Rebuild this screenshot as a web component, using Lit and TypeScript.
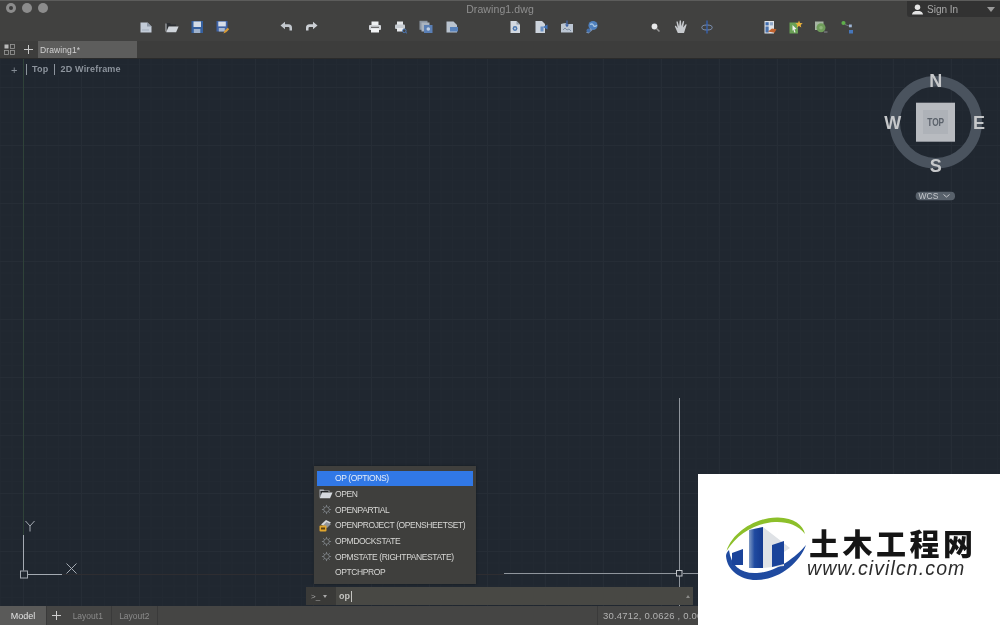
import { LitElement, html, css } from "lit";
import { customElement } from "lit/decorators.js";

const toolbar = () => [
  [
    html`<svg class="ic" viewBox="0 0 14 14" width="14" height="14"><path d="M1.500 2.500h7l4 4v6h-11z" fill="#c3ccd8"/><path d="M8 2.500l4.500 4H8z" fill="#8d97a5"/><path d="M3 10h7" stroke="#a3aebd" stroke-width="1"/></svg>`,
    html`<svg class="ic" viewBox="0 0 14 14" width="14" height="14"><path d="M1 3h4l1 1.500h5v1.500H4l-3 6z" fill="#2c2f33"/><path d="M3.600 6.500h10l-2.500 5.800H1.200z" fill="#cfd4da"/><path d="M1 3.500v8" stroke="#dfe3e8" stroke-width=".8"/></svg>`,
    html`<svg class="ic" viewBox="0 0 14 14" width="14" height="14"><rect x="1.500" y="1" width="11.500" height="12" fill="#35609f"/><rect x="3.500" y="1.500" width="7.500" height="5.500" fill="#d3dbe6"/><rect x="3.800" y="9" width="6.500" height="4" fill="#9fb2cc"/></svg>`,
    html`<svg class="ic" viewBox="0 0 14 14" width="14" height="14"><rect x="0.500" y="1" width="11" height="10.500" fill="#3f63a6"/><rect x="2.300" y="1.600" width="7.500" height="4.800" fill="#d6dde8"/><rect x="2.800" y="8" width="6" height="3.500" fill="#a9b8d0"/><path d="M7.500 13.500l1-2.800 3.200-3 1.500 1.500-3 3z" fill="#d99a33"/></svg>`,
  ],
  [
    html`<svg class="ic" viewBox="0 0 14 14" width="14" height="14"><path d="M1.500 5.500L6 1.800v2.400h3.500c2.300 0 3.500 1.400 3.500 3.600V10.500H10.500V8.300c0-1-.5-1.400-1.500-1.400H6v2.300z" fill="#c2c7cd"/></svg>`,
    html`<svg class="ic" viewBox="0 0 14 14" width="14" height="14"><path d="M12.500 5.500L8 1.800v2.400H4.500C2.200 4.200 1 5.600 1 7.800V10.500H3.500V8.300c0-1 .5-1.400 1.500-1.400H8v2.300z" fill="#ccd0d5"/></svg>`,
  ],
  [
    html`<svg class="ic" viewBox="0 0 14 14" width="14" height="14"><rect x="3.500" y="1.500" width="7" height="4" fill="#eef0f2"/><rect x="1" y="5" width="12" height="5" rx="1" fill="#d3d6da"/><rect x="3" y="8.500" width="8" height="4" fill="#f2f3f5"/><rect x="3" y="6.800" width="8" height="1" fill="#555"/></svg>`,
    html`<svg class="ic" viewBox="0 0 14 14" width="14" height="14"><rect x="3" y="1.500" width="6" height="3.500" fill="#e4e7ea"/><rect x="1" y="4.500" width="10" height="4.500" rx="1" fill="#c6cbd1"/><rect x="3" y="8" width="6" height="3.500" fill="#e8eaed"/><circle cx="10.300" cy="10.800" r="1.800" fill="none" stroke="#4c79b8" stroke-width="1"/><path d="M11.500 12l1.500 1.300" stroke="#4c79b8"/></svg>`,
    html`<svg class="ic" viewBox="0 0 14 14" width="14" height="14"><rect x="0.500" y="0.800" width="8" height="9" fill="#8b95a2"/><rect x="2.500" y="2.500" width="8" height="9" fill="#aab3bf"/><rect x="5" y="5" width="8.500" height="8" fill="#5a7fb5"/><circle cx="9.300" cy="9" r="1.800" fill="#c2d0e4"/></svg>`,
    html`<svg class="ic" viewBox="0 0 14 14" width="14" height="14"><path d="M1.500 1.500h7l3.500 3.500v7.500H1.500z" fill="#b9c3cf"/><rect x="5" y="7" width="8" height="4.500" fill="#5882bb"/></svg>`,
  ],
  [
    html`<svg class="ic" viewBox="0 0 14 14" width="14" height="14"><path d="M2.500 1h6l3.500 3.500V13H2.500z" fill="#d3d9e1"/><path d="M8.500 1v3.500H12z" fill="#95a0ae"/><circle cx="7" cy="8.500" r="2.400" fill="#4c78b0"/><circle cx="7" cy="8.500" r=".9" fill="#d3d9e1"/></svg>`,
    html`<svg class="ic" viewBox="0 0 14 14" width="14" height="14"><path d="M1.500 1h6.500l3 3v9H1.500z" fill="#cdd4dd"/><path d="M13.500 4.500L9 7l4.500 2.500z" fill="#3f72b8"/><path d="M6.500 6.500h3v5h-3z" fill="#3f72b8" opacity=".7"/></svg>`,
    html`<svg class="ic" viewBox="0 0 14 14" width="14" height="14"><path d="M1 4h12v8.500H1z" fill="#bcc6d3"/><path d="M1 4l3-1h2l1 1z" fill="#9aa6b5"/><path d="M7 0.500v6" stroke="#3f64a8" stroke-width="1.300"/><path d="M4.800 4.500L7 7l2.200-2.500z" fill="#3f64a8"/><path d="M3 10l2-2 2 2 2-1 2 2" fill="none" stroke="#7d8ea5"/></svg>`,
    html`<svg class="ic" viewBox="0 0 14 14" width="14" height="14"><circle cx="8" cy="5.500" r="4.600" fill="#4f80bd"/><path d="M5 4.500c2-1 3-.5 3.500 1s2 1 3.300-.3" stroke="#a7c5e2" stroke-width="1.300" fill="none"/><path d="M1 12.500l4.500-4.500 2 2-4 3.500z" fill="#7f97b8"/><circle cx="3.500" cy="10.500" r="2" fill="#456fa8"/></svg>`,
  ],
  [
    html`<svg class="ic" viewBox="0 0 14 14" width="14" height="14"><circle cx="6.500" cy="6.500" r="2.900" fill="#e8e9ea"/><path d="M8.500 8.500l3 3" stroke="#9b9b9b" stroke-width="1.500"/></svg>`,
    html`<svg class="ic" viewBox="0 0 14 14" width="14" height="14"><path d="M3.800 13L1 6.800c-.4-1 .7-1.500 1.300-.6l1.400 2-1.200-6c-.2-1 1-1.200 1.300-.3l1.300 4.500L5.600 1c0-1 1.300-1 1.400 0l.4 5.300 1.400-4.700c.3-.9 1.500-.6 1.300.3L9 7.400l2.300-2.700c.7-.8 1.700 0 1.100.9L10 13z" fill="#c6c9cd"/></svg>`,
    html`<svg class="ic" viewBox="0 0 14 14" width="14" height="14"><ellipse cx="7" cy="7.500" rx="5.200" ry="2.500" fill="none" stroke="#7e93b5" stroke-width="1"/><path d="M7 .5v13" stroke="#3563b6" stroke-width="1.300"/></svg>`,
  ],
  [
    html`<svg class="ic" viewBox="0 0 14 14" width="14" height="14"><rect x="1.500" y="1" width="9.500" height="12.500" fill="#dfe3e8"/><rect x="2.500" y="2.200" width="3.200" height="3.200" fill="#3f6db0"/><rect x="6.800" y="2.200" width="3.200" height="3.200" fill="#8fa7c8"/><rect x="2.500" y="6.500" width="3.200" height="6" fill="#4a73ad"/><path d="M5 11.500l4-3 4.500.8-2 3.500z" fill="#c0622e"/></svg>`,
    html`<svg class="ic" viewBox="0 0 14 14" width="14" height="14"><rect x="0.500" y="2.500" width="8.500" height="11" fill="#69a055"/><path d="M3.500 5l4 4-2 .2 1 3-1.200.4-1-3L3.500 11z" fill="#f0f2f0"/><path d="M10 .5l1 2.500 2.700.2-2 1.700.6 2.600L10 6l-2.200 1.500.6-2.600-2-1.700L9 3z" fill="#eab13c"/></svg>`,
    html`<svg class="ic" viewBox="0 0 14 14" width="14" height="14"><rect x="1" y="1.500" width="8.500" height="8.500" fill="#a7b5a4"/><circle cx="7" cy="7.800" r="4.500" fill="#6f9c5a"/><circle cx="7" cy="7.800" r="1.800" fill="#8eb57a"/><path d="M10 12h3.500" stroke="#8b8f93"/></svg>`,
    html`<svg class="ic" viewBox="0 0 14 14" width="14" height="14"><circle cx="3.500" cy="3" r="2.100" fill="#5fae4b"/><rect x="9" y="4.500" width="2.800" height="2.800" fill="#9fb6d6"/><rect x="9" y="10" width="4" height="3.500" fill="#4676ba"/><path d="M5 4.500l4 1.500" stroke="#889" stroke-width=".7"/></svg>`,
  ],
];

const gear = html`<svg class="mi" viewBox="0 0 12 12" width="11" height="11"><g stroke="#7f8388" stroke-width="1"><path d="M6 1v10M1 6h10M2.500 2.500l7 7M9.500 2.500l-7 7"/></g><circle cx="6" cy="6" r="3" fill="#3f3f3d" stroke="#7f8388"/></svg>`;
const folder = html`<svg class="mi" viewBox="0 0 14 12" width="14" height="12"><path d="M0.500 1.500h4l1 1h5v1.500H3.500L.5 10z" fill="#a9aeb5"/><path d="M1.500 3h8v1H3.500L1.500 8z" fill="#222528"/><path d="M3 4.500h10.500l-2.500 5.700H.7z" fill="#d5d9de"/></svg>`;
const project = html`<svg class="mi" viewBox="0 0 14 13" width="14" height="13"><path d="M2 5.500l5-4.500 5 2.500-5 4.500z" fill="#d6d8da"/><path d="M3.500 7l4-4 4.500 2-4 4z" fill="#8f9399"/><rect x="0.500" y="6.500" width="7" height="6" rx="1" fill="#e0a52d"/><rect x="2" y="8.500" width="4" height="2" fill="#5b4010"/></svg>`;

const items: [string, unknown][] = [
  ["OP (OPTIONS)", null],
  ["OPEN", folder],
  ["OPENPARTIAL", gear],
  ["OPENPROJECT (OPENSHEETSET)", project],
  ["OPMDOCKSTATE", gear],
  ["OPMSTATE (RIGHTPANESTATE)", gear],
  ["OPTCHPROP", null],
];

@customElement("app-root")
export class AppRoot extends LitElement {
  static styles = css`
    :host { display: block; height: 625px; overflow: hidden; font-family: "Liberation Sans", Arial, sans-serif; }
    .app { position: relative; height: 625px; display: grid; grid-template-rows: 41px 18px 547px 19px; background: #202730; filter: blur(.35px); }
    svg { display: block; }

    .titlebar { background: #414140; border-top: 1px solid #5c5c5b; display: flex; flex-direction: column; box-sizing: border-box; }
    .top { height: 16px; display: grid; grid-template-columns: 1fr auto 1fr; align-items: start; }
    .lights { display: flex; gap: 6px; padding: 2px 0 0 6px; }
    .light { width: 10px; height: 10px; border-radius: 50%; background: #8c8c8c; display: flex; align-items: center; justify-content: center; }
    .light i { width: 4px; height: 4px; border-radius: 50%; background: #3c3c3c; }
    .title { color: #8f8f8f; font-size: 10.500px; line-height: 16px; letter-spacing: .1px; }
    .signin { justify-self: end; width: 93px; height: 16px; background: #323232; border-radius: 0 0 0 3px; display: flex; align-items: center; color: #a9a9a9; font-size: 10px; box-sizing: border-box; padding: 0 5px 0 4px; gap: 3px; }
    .signin span { flex: 1; }
    .caret { width: 0; height: 0; border-left: 4px solid transparent; border-right: 4px solid transparent; border-top: 5px solid #9a9a9a; }

    .toolbar { display: flex; gap: 37.500px; padding: 0 0 0 133px; align-items: center; height: 20px; }
    .group { display: flex; }
    .cell { width: 25.700px; display: flex; justify-content: center; }

    .tabs { background: #3d3d3c; display: flex; align-items: stretch; border-bottom: 1px solid #2b2b2b; box-sizing: border-box; }
    .tabs .grid { width: 19px; display: flex; align-items: center; justify-content: center; }
    .tabs .plus { width: 19px; display: flex; align-items: center; justify-content: center; color: #c5c5c5; }
    .tab { width: 99px; background: #5d5d5c; color: #d0d0d0; font-size: 8.500px; display: flex; align-items: center; padding-left: 2px; box-sizing: border-box; letter-spacing: .1px; }

    .canvas {
      position: relative; overflow: hidden;
      background-color: #202730;
      background-image:
        linear-gradient(to right, #262d36 1px, transparent 1px),
        linear-gradient(to bottom, #262d36 1px, transparent 1px),
        linear-gradient(to right, #222932 1px, transparent 1px),
        linear-gradient(to bottom, #222932 1px, transparent 1px);
      background-size: 58px 58px, 58px 58px, 11.600px 11.600px, 11.600px 11.600px;
      background-position: 23px 0, 0 28px, 23px 0, 0 28px;
    }
    .overlay { position: absolute; inset: 0; }
    .vp { position: absolute; left: 10px; top: 5px; display: flex; align-items: center; color: #8d949d; font-size: 9px; font-weight: bold; letter-spacing: .2px; height: 11px; }
    .vp .p { width: 16px; font-weight: normal; color: #858c95; font-size: 11px; padding-left: 1px; box-sizing: border-box; }
    .vp .b { border-left: 1px solid #8d949d; padding-left: 5px; height: 11px; line-height: 11px; margin-right: 6px; }

    .menu { position: absolute; left: 314px; top: 407px; width: 162px; height: 118px; background: #3f3f3d; box-sizing: border-box; padding: 5px 3px 0 3px; display: flex; flex-direction: column; gap: 1.200px; box-shadow: 0 0 2px #15191e; }
    .row { height: 14.500px; display: flex; align-items: center; color: #d8d8d6; font-size: 8.500px; letter-spacing: -.4px; }
    .row.sel { background: #3178e6; color: #e4ecf8; }
    .row .icon { width: 18px; display: flex; justify-content: center; flex: none; }

    .cmd { position: absolute; left: 306px; top: 528px; width: 387px; height: 18px; background: #484844; display: flex; align-items: center; }
    .prompt { width: 30px; height: 18px; background: #3a3a38; color: #a8a8a8; font-size: 8px; display: flex; align-items: center; padding-left: 5px; gap: 3px; box-sizing: border-box; }
    .prompt i { width: 0; height: 0; border-left: 2px solid transparent; border-right: 2px solid transparent; border-top: 3px solid #a8a8a8; }
    .input { flex: 1; padding-left: 3px; color: #c4c4c0; font-size: 9px; font-weight: bold; display: flex; align-items: center; }
    .cursor { width: 1px; height: 11px; background: #c4c4c0; margin-left: 1px; }
    .up { width: 0; height: 0; border-left: 2.500px solid transparent; border-right: 2.500px solid transparent; border-bottom: 3px solid #8b8b88; margin-right: 3px; }

    .status { background: #454544; display: flex; align-items: stretch; font-size: 8.500px; color: #8b8b8b; }
    .s-tab { display: flex; align-items: center; justify-content: center; border-right: 1px solid #3a3a3a; box-sizing: border-box; }
    .s-model { width: 47px; background: #5a5a59; color: #e2e2e2; font-size: 9px; }
    .s-plus { width: 18px; color: #cfcfcf; border: none; }
    .s-layout { width: 46.500px; }
    .s-fill { flex: 1; }
    .coords { width: 403px; border-left: 1px solid #3a3a3a; color: #b2b2b2; font-size: 9.500px; display: flex; align-items: center; padding-left: 5px; box-sizing: border-box; letter-spacing: .2px; white-space: nowrap; overflow: hidden; }

    .mark { position: absolute; left: 698px; top: 474px; right: 0; bottom: 0; background: #fff; display: flex; align-items: flex-start; padding: 38px 0 0 24px; box-sizing: border-box; }
    .brand { display: flex; flex-direction: column; margin-left: -5px; padding-top: 14px; color: #151515; }
    .cn { font-family: "Noto Sans CJK SC", sans-serif; font-weight: 900; font-size: 30px; line-height: 32px; letter-spacing: 3.500px; white-space: nowrap; margin-left: 2px; }
    .en { font-style: italic; font-size: 19.500px; line-height: 20px; color: #2c2c2c; white-space: nowrap; letter-spacing: 1.100px; }
  `;

  render() {
    return html`<div class="app">
      <div class="titlebar">
        <div class="top">
          <div class="lights">
            <div class="light"><i></i></div>
            <div class="light"></div>
            <div class="light"></div>
          </div>
          <div class="title">Drawing1.dwg</div>
          <div class="signin">
            <svg viewBox="0 0 14 12" width="13" height="11"><circle cx="7" cy="3.500" r="3" fill="#e4e4e4"/><path d="M1 11.500c.5-3.500 3-4 6-4s5.500.5 6 4z" fill="#e4e4e4"/></svg>
            <span>Sign In</span>
            <i class="caret"></i>
          </div>
        </div>
        <div class="toolbar">
          ${toolbar().map((g) => html`<div class="group">${g.map((i) => html`<div class="cell">${i}</div>`)}</div>`)}
        </div>
      </div>

      <div class="tabs">
        <div class="grid">
          <svg viewBox="0 0 11 11" width="11" height="11"><rect x=".5" y=".5" width="4" height="4" fill="#b9b9b9"/><rect x="6.500" y=".5" width="4" height="4" fill="none" stroke="#9a9a9a" stroke-width=".8"/><rect x=".5" y="6.500" width="4" height="4" fill="none" stroke="#9a9a9a" stroke-width=".8"/><rect x="6.500" y="6.500" width="4" height="4" fill="none" stroke="#9a9a9a" stroke-width=".8"/></svg>
        </div>
        <div class="plus">
          <svg viewBox="0 0 9 9" width="9" height="9"><path d="M4.500 0v9M0 4.500h9" stroke="#c8c8c8" stroke-width="1"/></svg>
        </div>
        <div class="tab">Drawing1*</div>
      </div>

      <div class="canvas">
        <svg class="overlay" viewBox="0 59 1000 547" width="1000" height="547">
          <path d="M23.500 59V535" stroke="#2f4239" stroke-width="1"/>
          <path d="M62 574.500H504" stroke="#2e2d31" stroke-width="1"/>
          <g stroke="#a4aab2" stroke-width="1" fill="none">
            <path d="M23.500 535V570.500M27.500 574.500H62"/>
            <rect x="20.500" y="571" width="7" height="7"/>
            <path d="M66.500 563.500l10 10M76.500 563.500l-10 10"/>
            <path d="M25.500 521l4.500 5 4.500-5M30 526v5.500"/>
          </g>
          <g stroke="#8f959c" stroke-width="1" fill="none">
            <path d="M679.500 398V570M679.500 576V606M504 573.500H676M683 573.500H700"/>
            <rect x="676.500" y="570.500" width="5.500" height="5.500" stroke="#c0c4c9"/>
          </g>
          <circle cx="935.700" cy="122.300" r="41" fill="none" stroke="#4a535e" stroke-width="10.500"/>
          <rect x="916" y="102.700" width="39" height="39" fill="#b8bbc0"/>
          <rect x="923" y="110" width="25" height="24" fill="#aeb2b8"/>
          <text x="935.700" y="126" text-anchor="middle" font-family="Liberation Sans" font-weight="bold" font-size="10" fill="#5b626b" textLength="17" lengthAdjust="spacingAndGlyphs">TOP</text>
          <g font-family="Liberation Sans" font-weight="bold" font-size="18" fill="#c6c8ca" text-anchor="middle">
            <text x="935.700" y="86.500">N</text>
            <text x="935.700" y="172">S</text>
            <text x="979" y="128.500">E</text>
            <text x="892.700" y="128.500">W</text>
          </g>
          <rect x="915.700" y="191.700" width="39.300" height="8.500" rx="4" fill="#58616b"/>
          <text x="918.500" y="199" font-family="Liberation Sans" font-size="8.500" fill="#c4c7cb">WCS</text>
          <path d="M943.500 194.500l3 2.500 3-2.500" fill="none" stroke="#c4c7cb" stroke-width="1"/>
        </svg>

        <div class="vp">
          <span class="p">+</span>
          <span class="b">Top</span>
          <span class="b">2D Wireframe</span>
        </div>

        <div class="menu">
          ${items.map(
            ([t, i], n) => html`<div class="row ${n === 0 ? "sel" : ""}"><span class="icon">${i}</span><span>${t}</span></div>`
          )}
        </div>

        <div class="cmd">
          <div class="prompt"><span>&gt;_</span><i></i></div>
          <div class="input"><span>op</span><span class="cursor"></span></div>
          <i class="up"></i>
        </div>
      </div>

      <div class="status">
        <div class="s-tab s-model">Model</div>
        <div class="s-tab s-plus">
          <svg viewBox="0 0 9 9" width="9" height="9"><path d="M4.500 0v9M0 4.500h9" stroke="#cfcfcf" stroke-width="1"/></svg>
        </div>
        <div class="s-tab s-layout">Layout1</div>
        <div class="s-tab s-layout">Layout2</div>
        <div class="s-fill"></div>
        <div class="coords">30.4712, 0.0626 , 0.0000</div>
      </div>

      <div class="mark">
        <svg viewBox="722 512 90 72" width="90" height="72">
          <defs>
            <linearGradient id="tall" x1="0" x2="1" y1="0" y2="0"><stop offset="0" stop-color="#7f9ac4"/><stop offset=".4" stop-color="#1f4aa0"/><stop offset="1" stop-color="#14398e"/></linearGradient>
          </defs>
          <path d="M726.500 551C733 531 757 517 778 517.500C794 518 803 525 805 534C798 525 787 521.500 775 522C755 523 737 534 726.500 551Z" fill="#8cbf2a"/>
          <path d="M726 556C727 570 740 580 756 580C780 580 800 562 806 545C795 558 776 572 757 573C741 574 731 566 729 550C727 552 726 554 726 556Z" fill="#1f4aa0"/>
          <path d="M749 530L763 527L790 548L784 552V566L763 568Z" fill="#dfe2e6"/>
          <path d="M749 530L763 527V568H749Z" fill="url(#tall)"/>
          <path d="M732 553L743 549V565H732Z" fill="#1a439a"/>
          <path d="M772 545L784 541V564L772 567Z" fill="#1a439a"/>
        </svg>
        <div class="brand">
          <div class="cn">土木工程网</div>
          <div class="en">www.civilcn.com</div>
        </div>
      </div>
    </div>`;
  }
}
